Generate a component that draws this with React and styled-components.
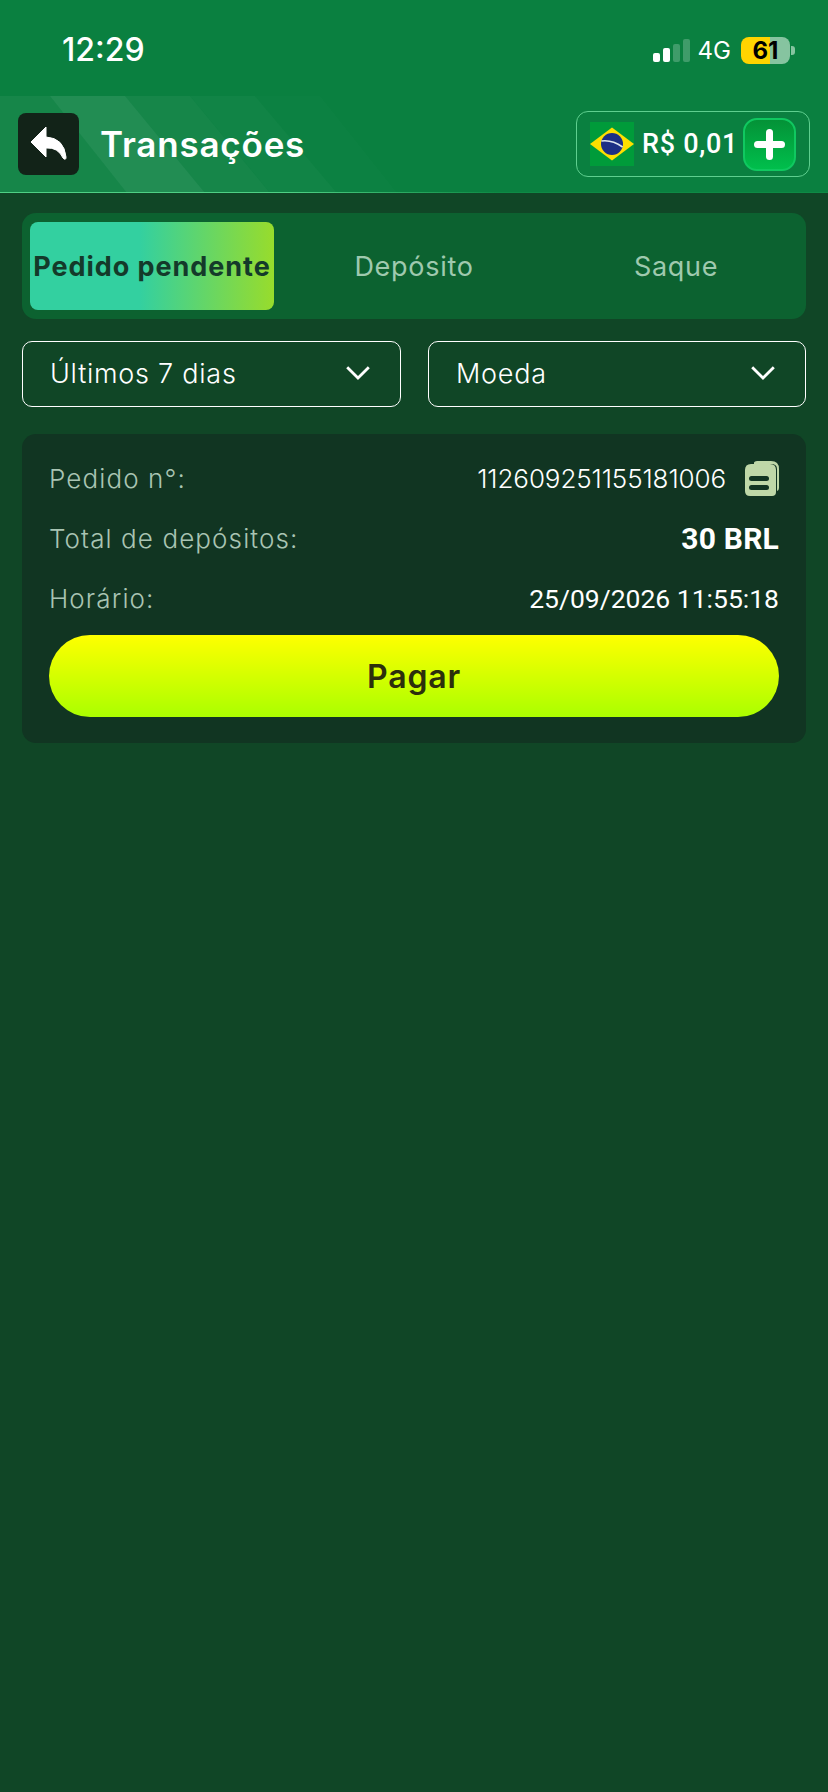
import styled, { createGlobalStyle } from "styled-components";

const GlobalStyle = createGlobalStyle`
    html, body {
        margin: 0;
        padding: 0;
        background: #104626;
    }
    * {
        box-sizing: border-box;
    }
`;

const displayFont = `Inter, "Open Sans", sans-serif`;
const numberFont = `Roboto, "Liberation Sans", sans-serif`;

const rows = [
    { label: "Pedido n°:", value: "112609251155181006", kind: "order" },
    { label: "Total de depósitos:", value: "30 BRL", kind: "total" },
    { label: "Horário:", value: "25/09/2026 11:55:18", kind: "time" },
];

function Chevron() {
    return (
        <svg width="24" height="14" viewBox="0 0 24 14" fill="none">
            <path d="M1.2 1.2 L12 12 L22.8 1.2" stroke="#fff" strokeWidth="2.8" />
        </svg>
    );
}

function CopyIcon() {
    return (
        <svg width="34" height="35" viewBox="0 0 34 35">
            <path d="M9 1.5 Q9.5 0 12 0 H26 Q34 0 34 8 V27 Q34 29.5 32 30 V8 Q32 3 26 3 H9 Z" fill="#bfd8a8" />
            <path d="M6 3 H25 Q31 3 31 9 V31 Q31 35 27 35 H5 Q0 35 0 30 V9 Q0 3 6 3 Z" fill="#bfd8a8" />
            <rect x="4" y="15" width="20" height="5" rx="2.5" fill="#113522" />
            <rect x="4" y="24" width="20" height="5" rx="2.5" fill="#113522" />
        </svg>
    );
}

function BackIcon() {
    return (
        <svg width="36" height="34" viewBox="0 0 36 34">
            <path d="M15 0 L0 15 L15 30 L15 21 Q27 20 32 31 Q35 34 35 30 Q33 11 15 10 Z" fill="#fff" stroke="#fff" strokeWidth="1" strokeLinejoin="round" />
        </svg>
    );
}

function BrazilFlag() {
    return (
        <svg width="44" height="44" viewBox="0 0 44 44">
            <rect width="44" height="44" fill="#009b3a" />
            <path d="M22 5.5 L44 22 L22 38.5 L0 22 Z" fill="#fedf00" />
            <circle cx="22" cy="22" r="11" fill="#1d2f85" />
            <path d="M11.4 19 Q22 17.5 32.6 25" stroke="#dfe6ee" strokeWidth="1.6" fill="none" />
        </svg>
    );
}

function HeaderStripes() {
    return (
        <Stripes viewBox="0 0 420 97" preserveAspectRatio="none">
            <path d="M0 0 H50 L127 97 H0 Z" fill="#ffffff" fillOpacity="0.05" />
            <path d="M50 0 H125 L205 97 H127 Z" fill="#ffffff" fillOpacity="0.1" />
            <path d="M125 0 H190 L270 97 H205 Z" fill="#ffffff" fillOpacity="0.05" />
            <path d="M190 0 H255 L337 97 H270 Z" fill="#ffffff" fillOpacity="0.03" />
            <path d="M255 0 H320 L397 97 H337 Z" fill="#ffffff" fillOpacity="0.012" />
        </Stripes>
    );
}

export default function App() {
    return (
        <Page>
            <GlobalStyle />
            <Header>
                <StatusBar>
                    <Clock>12:29</Clock>
                    <StatusRight>
                        <Signal>
                            <SignalBar $h={9} $on />
                            <SignalBar $h={14} $on />
                            <SignalBar $h={18} />
                            <SignalBar $h={23} />
                        </Signal>
                        <Network>4G</Network>
                        <Battery>
                            <BatteryLevel>61</BatteryLevel>
                        </Battery>
                        <BatteryTip />
                    </StatusRight>
                </StatusBar>
                <NavBar>
                    <HeaderStripes />
                    <BackButton>
                        <BackIcon />
                    </BackButton>
                    <Title>Transações</Title>
                    <Balance>
                        <BrazilFlag />
                        <Amount>R$ 0,01</Amount>
                        <AddButton>
                            <PlusH />
                            <PlusV />
                        </AddButton>
                    </Balance>
                </NavBar>
            </Header>
            <Main>
                <Tabs>
                    <Tab $active>Pedido pendente</Tab>
                    <Tab>Depósito</Tab>
                    <Tab>Saque</Tab>
                </Tabs>
                <Filters>
                    <Select>
                        <span>Últimos 7 dias</span>
                        <Chevron />
                    </Select>
                    <Select>
                        <span>Moeda</span>
                        <Chevron />
                    </Select>
                </Filters>
                <Card>
                    {rows.map(row => (
                        <Row key={row.kind}>
                            <Label>{row.label}</Label>
                            <Value $kind={row.kind}>
                                {row.value}
                                {row.kind === "order" && <CopyIcon />}
                            </Value>
                        </Row>
                    ))}
                    <PayButton>Pagar</PayButton>
                </Card>
            </Main>
        </Page>
    );
}

const Page = styled.div`
    width: 828px;
    min-height: 1792px;
    background: #104626;
    font-family: ${displayFont};
    color: #fff;
`;

const Header = styled.header`
    position: relative;
    background: #0a8040;
    height: 193px;

    &::after {
        content: "";
        position: absolute;
        left: 0;
        right: 0;
        bottom: 0;
        height: 1px;
        background: linear-gradient(90deg, #4fd085 0%, #4fd085 35%, #0e8a45 60%, #0e8a45 100%);
    }
`;

const StatusBar = styled.div`
    height: 96px;
    display: flex;
    align-items: flex-start;
    justify-content: space-between;
    padding: 29px 33px 0 62px;
`;

const Clock = styled.div`
    font-size: 32px;
    line-height: 42px;
    font-weight: 500;
`;

const StatusRight = styled.div`
    display: flex;
    align-items: center;
    height: 42px;
`;

const Signal = styled.div`
    display: flex;
    align-items: flex-end;
    gap: 3px;
    margin-right: 8px;
`;

const SignalBar = styled.div`
    width: 7px;
    height: ${p => p.$h}px;
    border-radius: 2px;
    background: ${p => (p.$on ? "#fff" : "rgba(255, 255, 255, 0.22)")};
`;

const Network = styled.div`
    font-size: 24px;
    font-weight: 400;
    margin-right: 10px;
`;

const Battery = styled.div`
    width: 49px;
    height: 27px;
    border-radius: 8px;
    overflow: hidden;
    background: linear-gradient(90deg, #ffd400 0 60%, #86c4a0 60% 100%);
`;

const BatteryLevel = styled.div`
    width: 100%;
    text-align: center;
    font-size: 24px;
    line-height: 27px;
    font-weight: 700;
    color: #000;
`;

const BatteryTip = styled.div`
    width: 4px;
    height: 9px;
    margin-left: 1px;
    border-radius: 0 3px 3px 0;
    background: #86c4a0;
`;

const NavBar = styled.div`
    position: relative;
    height: 96px;
    display: flex;
    align-items: center;
    padding: 0 18px;
`;

const Stripes = styled.svg`
    position: absolute;
    left: 0;
    top: 0;
    width: 420px;
    height: 97px;
`;

const BackButton = styled.div`
    position: relative;
    width: 61px;
    height: 62px;
    border-radius: 8px;
    background: #122318;
    display: flex;
    align-items: center;
    justify-content: center;
`;

const Title = styled.h1`
    position: relative;
    margin: 0 0 0 21px;
    font-size: 35px;
    font-weight: 600;
    letter-spacing: 0.8px;
`;

const Balance = styled.div`
    position: relative;
    margin-left: auto;
    width: 234px;
    height: 66px;
    border: 1px solid #5fcf8f;
    border-radius: 12px;
    display: flex;
    align-items: center;
    padding: 0 13px;
`;

const Amount = styled.div`
    font-family: ${numberFont};
    font-size: 27px;
    font-weight: 500;
    letter-spacing: 0.7px;
    margin-left: 8px;
`;

const AddButton = styled.div`
    position: relative;
    margin-left: auto;
    width: 53px;
    height: 53px;
    border-radius: 14px;
    border: 2px solid #10c860;
    background: linear-gradient(180deg, #049237, #00bf4c);
`;

const PlusH = styled.div`
    position: absolute;
    left: 9px;
    top: 21px;
    width: 31px;
    height: 7px;
    border-radius: 4px;
    background: #fff;
`;

const PlusV = styled.div`
    position: absolute;
    left: 21px;
    top: 9px;
    width: 7px;
    height: 31px;
    border-radius: 4px;
    background: #fff;
`;

const Main = styled.main`
    padding: 20px 22px;
`;

const Tabs = styled.div`
    height: 106px;
    background: #0c6230;
    border-radius: 14px;
    padding: 9px 8px;
    display: grid;
    grid-template-columns: 244px 280px 244px;
`;

const Tab = styled.div`
    display: flex;
    align-items: center;
    justify-content: center;
    font-size: 27px;
    letter-spacing: ${p => (p.$active ? "0.95px" : "0.7px")};
    white-space: nowrap;
    border-radius: 8px;
    font-weight: ${p => (p.$active ? 700 : 400)};
    color: ${p => (p.$active ? "#143a2a" : "#9fc9ae")};
    background: ${p => (p.$active ? "linear-gradient(90deg, #33d0a0 0%, #33d0a0 45%, #98dc2c 100%)" : "transparent")};
`;

const Filters = styled.div`
    display: grid;
    grid-template-columns: 379px 378px;
    justify-content: space-between;
    margin-top: 22px;
`;

const Select = styled.div`
    height: 66px;
    border: 1px solid #fff;
    border-radius: 10px;
    display: flex;
    align-items: center;
    justify-content: space-between;
    padding: 0 30px 2px 27px;
    font-size: 27px;
    font-weight: 300;
    letter-spacing: 0.75px;
`;

const Card = styled.section`
    margin-top: 27px;
    height: 309px;
    background: #113522;
    border-radius: 14px;
    padding: 14px 27px 0;
`;

const Row = styled.div`
    height: 60px;
    display: flex;
    align-items: center;
    justify-content: space-between;
`;

const Label = styled.div`
    font-size: 26px;
    font-weight: 300;
    letter-spacing: 1.1px;
    color: #a9c4b3;
`;

const Value = styled.div`
    display: flex;
    align-items: center;
    gap: 19px;
    color: #fff;
    font-family: ${p => (p.$kind === "order" ? displayFont : numberFont)};
    font-size: ${p => (p.$kind === "total" ? 30 : p.$kind === "time" ? 26.5 : 26)}px;
    font-weight: ${p => (p.$kind === "total" ? 700 : p.$kind === "order" ? 300 : 400)};
    letter-spacing: ${p => (p.$kind === "order" ? "-0.1px" : p.$kind === "total" ? "0.2px" : "0")};
`;

const PayButton = styled.div`
    margin-top: 7px;
    height: 82px;
    border-radius: 41px;
    background: linear-gradient(180deg, #ffff00, #aaff00);
    display: flex;
    align-items: center;
    justify-content: center;
    font-size: 32px;
    font-weight: 600;
    letter-spacing: 0.8px;
    color: #2c2f0c;
`;
